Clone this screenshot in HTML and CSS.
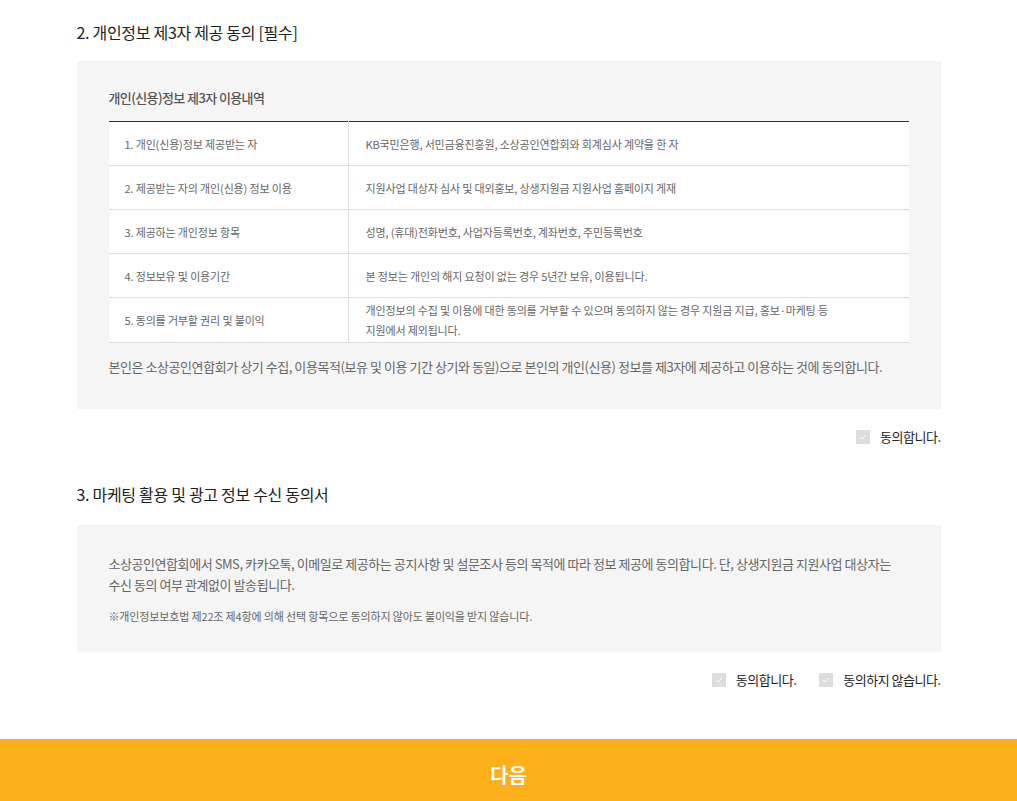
FILE: index.html
```html
<html>
<head>
<meta charset="utf-8">
<link rel="stylesheet" href="styles.css">
</head>
<body>
<div id="wrapper">

  <div class="section">
    <h3 class="sec_title">2. 개인정보 제3자 제공 동의 [필수]</h3>
    <div class="agree_box">
      <p class="box_title">개인(신용)정보 제3자 이용내역</p>
      <table class="info_table">
        <tr>
          <th>1. 개인(신용)정보 제공받는 자</th>
          <td>KB국민은행, 서민금융진흥원, 소상공인연합회와 회계심사 계약을 한 자</td>
        </tr>
        <tr>
          <th>2. 제공받는 자의 개인(신용) 정보 이용</th>
          <td>지원사업 대상자 심사 및 대외홍보, 상생지원금 지원사업 홈페이지 게재</td>
        </tr>
        <tr>
          <th>3. 제공하는 개인정보 항목</th>
          <td>성명, (휴대)전화번호, 사업자등록번호, 계좌번호, 주민등록번호</td>
        </tr>
        <tr>
          <th>4. 정보보유 및 이용기간</th>
          <td>본 정보는 개인의 해지 요청이 없는 경우 5년간 보유, 이용됩니다.</td>
        </tr>
        <tr class="two_line">
          <th>5. 동의를 거부할 권리 및 불이익</th>
          <td>개인정보의 수집 및 이용에 대한 동의를 거부할 수 있으며 동의하지 않는 경우 지원금 지급, 홍보·마케팅 등<br>지원에서 제외됩니다.</td>
        </tr>
      </table>
      <p class="box_text">본인은 소상공인연합회가 상기 수집, 이용목적(보유 및 이용 기간 상기와 동일)으로 본인의 개인(신용) 정보를 제3자에 제공하고 이용하는 것에 동의합니다.</p>
    </div>
    <div class="check_row">
      <label class="chk"><span class="chk_box"><svg width="8" height="6" viewBox="0 0 8 6"><path d="M1 3 L3 5 L7 1" fill="none" stroke="#fff" stroke-width="1"/></svg></span>동의합니다.</label>
    </div>
  </div>

  <div class="section sec3">
    <h3 class="sec_title">3. 마케팅 활용 및 광고 정보 수신 동의서</h3>
    <div class="agree_box box2">
      <p class="box_text">소상공인연합회에서 SMS, 카카오톡, 이메일로 제공하는 공지사항 및 설문조사 등의 목적에 따라 정보 제공에 동의합니다. 단, 상생지원금 지원사업 대상자는<br>수신 동의 여부 관계없이 발송됩니다.</p>
      <p class="box_note">※개인정보보호법 제22조 제4항에 의해 선택 항목으로 동의하지 않아도 불이익을 받지 않습니다.</p>
    </div>
    <div class="check_row">
      <label class="chk"><span class="chk_box"><svg width="8" height="6" viewBox="0 0 8 6"><path d="M1 3 L3 5 L7 1" fill="none" stroke="#fff" stroke-width="1"/></svg></span>동의합니다.</label>
      <label class="chk"><span class="chk_box"><svg width="8" height="6" viewBox="0 0 8 6"><path d="M1 3 L3 5 L7 1" fill="none" stroke="#fff" stroke-width="1"/></svg></span>동의하지 않습니다.</label>
    </div>
  </div>

</div>
<div class="next_btn">다음</div>
</body>
</html>
```

FILE: styles.css
```css
body
{
  margin:0;
  padding:0;
  background-color:#fff;
  font-family:"Noto Sans CJK KR", sans-serif;
  color:#222;
}
#wrapper
{
  width:864px;
  margin:0 auto;
  padding-top:20px;
}
.sec_title
{
  margin:0;
  font-size:16px;
  font-weight:400;
  line-height:24px;
  letter-spacing:-0.3px;
  color:#222;
}
.sec3
{
  margin-top:35px;
}
.agree_box
{
  margin-top:17px;
  background-color:#f5f5f5;
  padding:26px 32px 32px 32px;
}
.box_title
{
  margin:0 0 12px 0;
  font-size:13px;
  font-weight:500;
  line-height:22px;
  letter-spacing:-0.6px;
  color:#555;
}
.info_table
{
  width:800px;
  border-collapse:collapse;
  background-color:#fff;
  border-top:1px solid #333;
}
.info_table th,
.info_table td
{
  height:44px;
  padding:0 16px;
  border-bottom:1px solid #ddd;
  font-size:11px;
  font-weight:400;
  text-align:left;
  letter-spacing:-0.15px;
  color:#666;
  line-height:20px;
}
.info_table th
{
  width:207px;
  border-right:1px solid #ddd;
}
.info_table td
{
  padding-left:17px;
}
.two_line td
{
  height:45px;
}
.box_text
{
  margin:13px 0 0 0;
  font-size:13px;
  line-height:21px;
  letter-spacing:-0.44px;
  color:#666;
}
.box2
{
  margin-top:19px;
  padding-top:28px;
  padding-bottom:26px;
}
.box2 .box_text
{
  margin-top:0;
}
.box_note
{
  margin:11px 0 0 0;
  font-size:11px;
  line-height:20px;
  letter-spacing:-0.15px;
  color:#666;
}
.check_row
{
  display:flex;
  justify-content:flex-end;
  gap:23px;
  margin-top:18px;
}
.chk
{
  display:flex;
  align-items:center;
  gap:10px;
  font-size:13px;
  line-height:20px;
  letter-spacing:-0.5px;
  color:#222;
}
.chk_box
{
  width:14px;
  height:14px;
  background-color:#ddd;
  display:flex;
  align-items:center;
  justify-content:center;
}
.next_btn
{
  margin-top:49px;
  height:72px;
  line-height:72px;
  background-color:#fdb01a;
  color:#fff;
  text-align:center;
  font-size:20px;
  font-weight:700;
}
```
